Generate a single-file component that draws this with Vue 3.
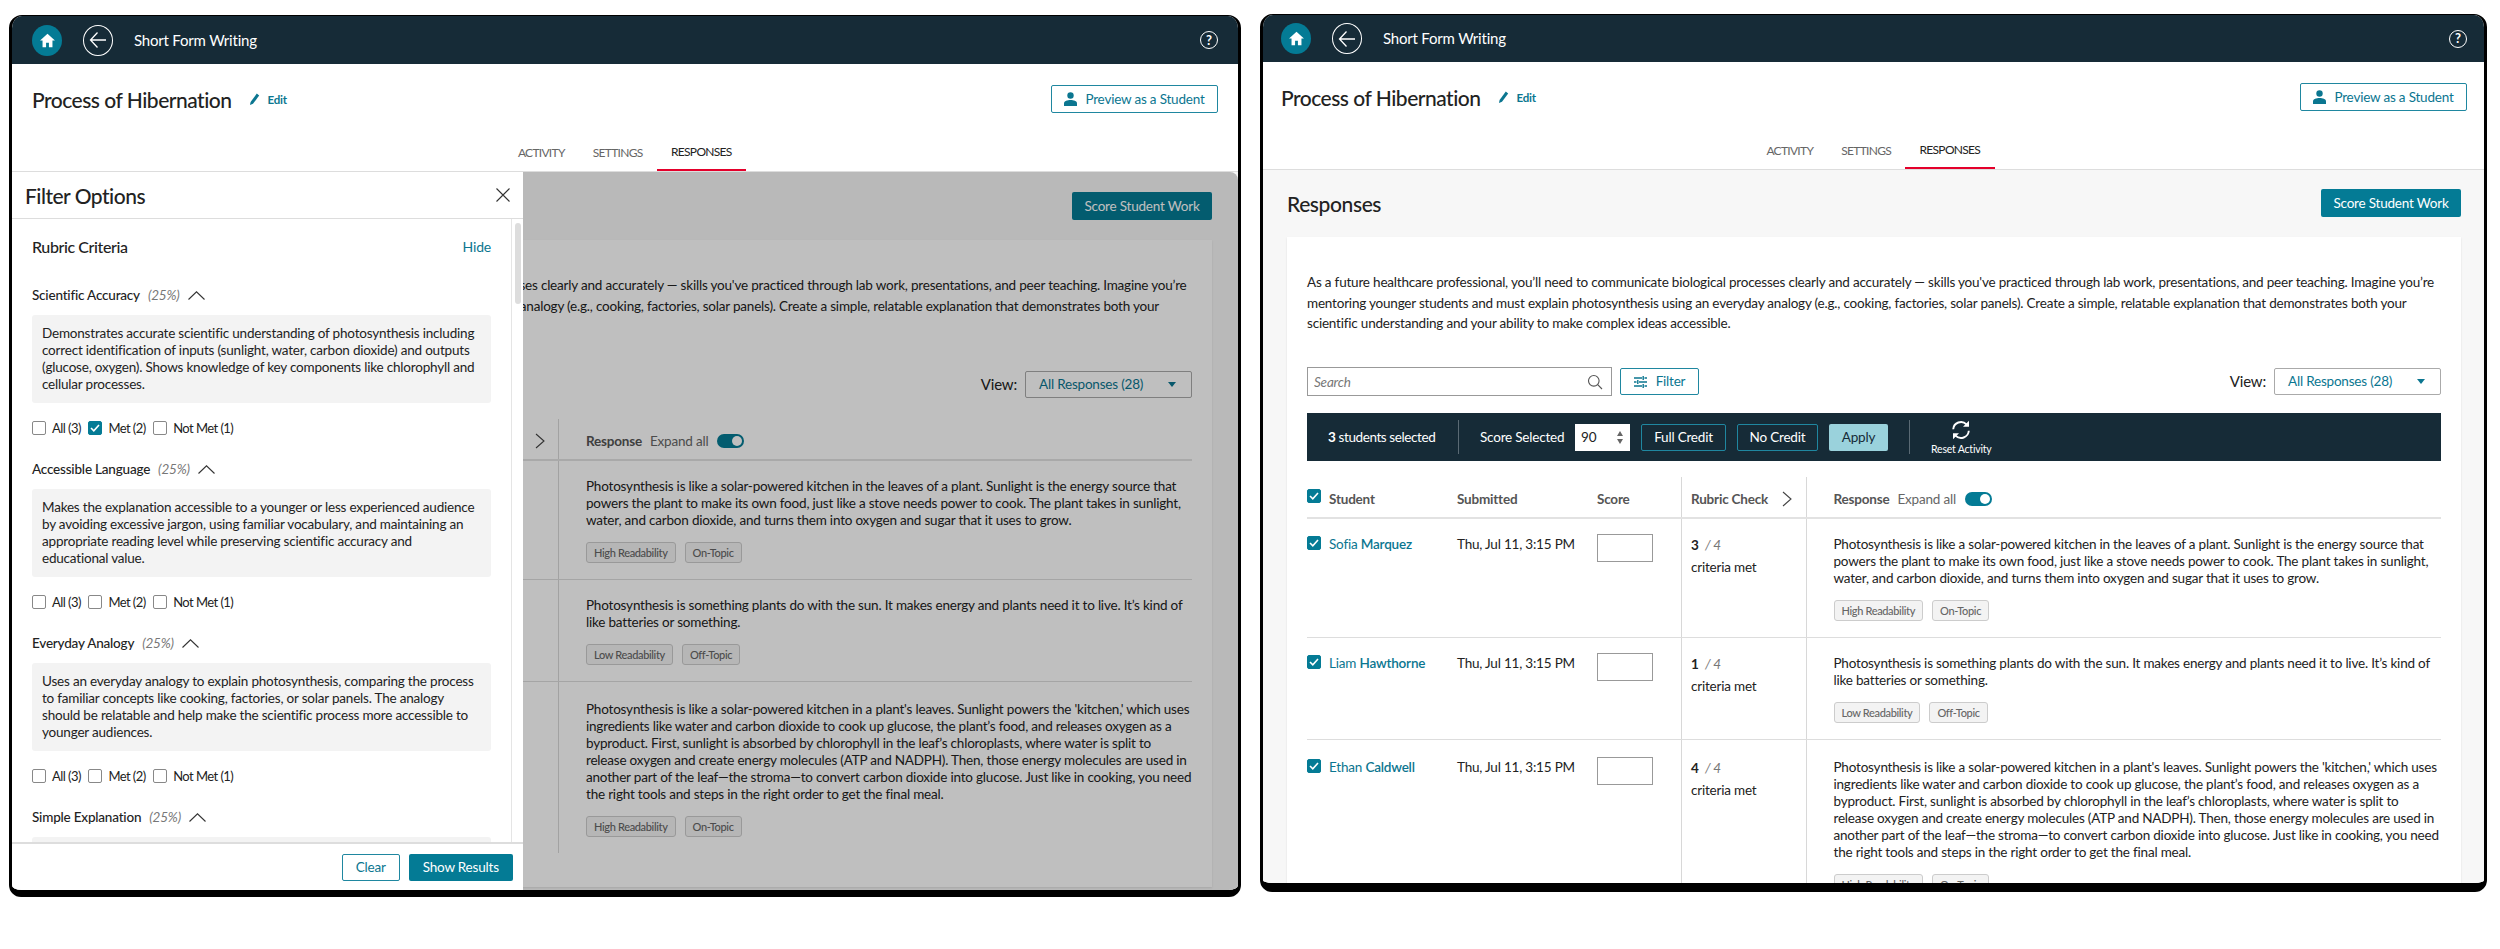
<script setup>
const frames = [
  { id: "a", panel: true },
  { id: "b", panel: false },
]

const tabs = ["ACTIVITY", "SETTINGS", "RESPONSES"]

const intro =
  "As a future healthcare professional, you’ll need to communicate biological processes clearly and accurately — skills you've practiced through lab work, presentations, and peer teaching. Imagine you’re mentoring younger students and must explain photosynthesis using an everyday analogy (e.g., cooking, factories, solar panels). Create a simple, relatable explanation that demonstrates both your scientific understanding and your ability to make complex ideas accessible."

const students = [
  {
    first: "Sofia",
    last: "Marquez",
    met: 3,
    text: "Photosynthesis is like a solar-powered kitchen in the leaves of a plant. Sunlight is the energy source that powers the plant to make its own food, just like a stove needs power to cook. The plant takes in sunlight, water, and carbon dioxide, and turns them into oxygen and sugar that it uses to grow.",
    tags: ["High Readability", "On-Topic"],
  },
  {
    first: "Liam",
    last: "Hawthorne",
    met: 1,
    text: "Photosynthesis is something plants do with the sun. It makes energy and plants need it to live. It’s kind of like batteries or something.",
    tags: ["Low Readability", "Off-Topic"],
  },
  {
    first: "Ethan",
    last: "Caldwell",
    met: 4,
    text: "Photosynthesis is like a solar-powered kitchen in a plant's leaves. Sunlight powers the 'kitchen,' which uses ingredients like water and carbon dioxide to cook up glucose, the plant’s food, and releases oxygen as a byproduct. First, sunlight is absorbed by chlorophyll in the leaf’s chloroplasts, where water is split to release oxygen and create energy molecules (ATP and NADPH). Then, those energy molecules are used in another part of the leaf—the stroma—to convert carbon dioxide into glucose. Just like in cooking, you need the right tools and steps in the right order to get the final meal.",
    tags: ["High Readability", "On-Topic"],
  },
]

const criteria = [
  {
    name: "Scientific Accuracy",
    text: "Demonstrates accurate scientific understanding of photosynthesis including correct identification of inputs (sunlight, water, carbon dioxide) and outputs (glucose, oxygen). Shows knowledge of key components like chlorophyll and cellular processes.",
    metOn: true,
  },
  {
    name: "Accessible Language",
    text: "Makes the explanation accessible to a younger or less experienced audience by avoiding excessive jargon, using familiar vocabulary, and maintaining an appropriate reading level while preserving scientific accuracy and educational value.",
    metOn: false,
  },
  {
    name: "Everyday Analogy",
    text: "Uses an everyday analogy to explain photosynthesis, comparing the process to familiar concepts like cooking, factories, or solar panels. The analogy should be relatable and help make the scientific process more accessible to younger audiences.",
    metOn: false,
  },
  // this one is cut off by the panel footer, only the top of its box shows
  { name: "Simple Explanation", text: "", metOn: false },
]
</script>

<template>
  <div class="page">
    <div v-for="frame in frames" :key="frame.id" class="frame" :class="'frame-' + frame.id">
      <header class="topbar">
        <span class="home">
          <svg width="17" height="17" viewBox="0 0 24 24"><path fill="#fff" d="M12 2.500 1.500 12H5v9.500h5V15h4v6.500h5V12h3.500z" /></svg>
        </span>
        <span class="back">
          <svg width="18" height="18" viewBox="0 0 18 18" fill="none" stroke="#fff" stroke-width="1.300"><path d="M8.500 1.500 1.500 9l7 7.500M1.500 9H17" /></svg>
        </span>
        <span class="app-name">Short Form Writing</span>
        <span class="help">?</span>
      </header>

      <div class="title-row">
        <h1 class="title">Process of Hibernation</h1>
        <span class="edit">
          <svg width="10" height="12" viewBox="0 0 10 12"><path fill="#0b7690" d="M0 12l.6-3L6.800.6l2.400 1.800L3 10.800z" /></svg>
          Edit
        </span>
        <button class="btn-outline preview">
          <svg width="13" height="14" viewBox="0 0 13 14"><circle cx="6.500" cy="3.500" r="3.200" fill="#0b7690" /><path fill="#0b7690" d="M0 14v-2.800C0 9.200 3.500 8 6.500 8s6.500 1.200 6.500 3.200V14z" /></svg>
          Preview as a Student
        </button>
      </div>

      <nav class="tabs">
        <span v-for="tab in tabs" :key="tab" class="tab" :class="{ active: tab === 'RESPONSES' }">{{ tab }}</span>
      </nav>

      <main class="body">
        <div class="section-head">
          <h2 class="section-title">Responses</h2>
          <button class="btn-fill">Score Student Work</button>
        </div>

        <section class="card">
          <p class="intro">{{ intro }}</p>

          <div class="controls">
            <div class="search">
              <input class="search-input" placeholder="Search" />
              <svg width="16" height="16" viewBox="0 0 16 16" fill="none" stroke="#555" stroke-width="1.100"><circle cx="6.800" cy="6.800" r="5.300" /><path d="M10.700 10.700 15 15" /></svg>
            </div>
            <button class="btn-outline filter">
              <svg width="13" height="12" viewBox="0 0 13 12" stroke="#0b7690" stroke-width="1.400" fill="none"><path d="M0 2h8M10.500 2H13M9.200 0v4M0 6h2.500M5 6h8M3.800 4v4M0 10h8M10.500 10H13M9.200 8v4" /></svg>
              Filter
            </button>
            <span class="view-label">View:</span>
            <div class="select">
              <span>All Responses (28)</span>
              <span class="caret"></span>
            </div>
          </div>

          <div v-if="!frame.panel" class="toolbar">
            <span class="selected-count"><b>3</b> students selected</span>
            <span class="bar-divider"></span>
            <span class="score-label">Score Selected</span>
            <div class="stepper">
              <span>90</span>
              <span class="stepper-arrows"><i class="up"></i><i class="down"></i></span>
            </div>
            <button class="btn-bar">Full Credit</button>
            <button class="btn-bar">No Credit</button>
            <button class="btn-apply">Apply</button>
            <span class="bar-divider second"></span>
            <div class="reset">
              <svg width="20" height="20" viewBox="0 0 20 20" fill="none" stroke="#fff" stroke-width="1.900">
                <path d="M2.200 9.200A7.800 7.800 0 0 1 15.500 4.300" />
                <path d="M17.800 10.800A7.800 7.800 0 0 1 4.500 15.700" />
                <path d="M18 .8v6h-6z" fill="#fff" stroke="none" />
                <path d="M2 19.200v-6h6z" fill="#fff" stroke="none" />
              </svg>
              <span>Reset Activity</span>
            </div>
          </div>

          <div class="table">
            <div class="row head">
              <div class="cell student">
                <span class="check on raised"><svg width="10" height="8" viewBox="0 0 10 8" fill="none" stroke="#fff" stroke-width="1.600"><path d="M1 4l2.800 2.800L9 1" /></svg></span>
                <span>Student</span>
              </div>
              <div class="cell">Submitted</div>
              <div class="cell">Score</div>
              <div class="cell rubric">
                Rubric Check
                <svg class="rubric-arrow" width="10" height="16" viewBox="0 0 10 16" fill="none" stroke="#444" stroke-width="1.100"><path d="M1 1l8 7-8 7" /></svg>
              </div>
              <div class="cell response">
                Response
                <span class="expand">Expand all</span>
                <span class="toggle"><i></i></span>
              </div>
            </div>

            <div v-for="s in students" :key="s.first" class="row">
              <div class="cell student">
                <span class="check on"><svg width="10" height="8" viewBox="0 0 10 8" fill="none" stroke="#fff" stroke-width="1.600"><path d="M1 4l2.800 2.800L9 1" /></svg></span>
                <span class="name">{{ s.first }} <b>{{ s.last }}</b></span>
              </div>
              <div class="cell">Thu, Jul 11, 3:15 PM</div>
              <div class="cell"><input class="score-input" /></div>
              <div class="cell rubric">
                <div class="met"><b>{{ s.met }}</b> <em>/ 4</em></div>
                <div class="met-label">criteria met</div>
              </div>
              <div class="cell response">
                <p class="answer">{{ s.text }}</p>
                <div class="tags">
                  <span v-for="tag in s.tags" :key="tag" class="tag">{{ tag }}</span>
                </div>
              </div>
            </div>
          </div>
        </section>

        <template v-if="frame.panel">
          <div class="overlay"></div>
          <aside class="panel">
            <div class="panel-head">
              <span class="panel-title">Filter Options</span>
              <svg width="14" height="14" viewBox="0 0 14 14" stroke="#333" stroke-width="1.100"><path d="M.5.500l13 13M13.500.500l-13 13" /></svg>
            </div>
            <div class="panel-scroll">
              <div class="panel-content">
                <div class="rubric-head">
                  <span class="rubric-title">Rubric Criteria</span>
                  <span class="hide">Hide</span>
                </div>
                <div v-for="c in criteria" :key="c.name" class="criterion">
                  <div class="criterion-head">
                    <b>{{ c.name }}</b>
                    <em>(25%)</em>
                    <svg width="17" height="9" viewBox="0 0 17 9" fill="none" stroke="#333" stroke-width="1.100"><path d="M.5 8.500 8.500.8l8 7.700" /></svg>
                  </div>
                  <p class="criterion-text">{{ c.text }}</p>
                  <div class="options">
                    <label class="option"><span class="check"></span>All (3)</label>
                    <label class="option">
                      <span class="check" :class="{ on: c.metOn }"><svg v-if="c.metOn" width="10" height="8" viewBox="0 0 10 8" fill="none" stroke="#fff" stroke-width="1.600"><path d="M1 4l2.800 2.800L9 1" /></svg></span>Met (2)
                    </label>
                    <label class="option"><span class="check"></span>Not Met (1)</label>
                  </div>
                </div>
              </div>
              <div class="scroll-track"><span class="scroll-thumb"></span></div>
            </div>
            <div class="panel-foot">
              <button class="btn-outline clear">Clear</button>
              <button class="btn-fill results">Show Results</button>
            </div>
          </aside>
        </template>
      </main>
    </div>
  </div>
</template>

<style scoped>
.page {
  display: flex;
  align-items: flex-start;
  gap: 19px;
  padding-left: 9px;
  font-family: Lato, "Noto Sans", sans-serif;
  font-size: 13.5px;
  line-height: 17px;
  letter-spacing: -0.2px;
  color: #222;
}

.frame {
  --pad-l: 20px;
  --pad-r: 20px;
  display: flex;
  flex-direction: column;
  box-sizing: border-box;
  flex: none;
  overflow: hidden;
  background: #fff;
  border: 3px solid #000;
  border-top-width: 1px;
  border-radius: 13px 13px 12px 12px;
}
.frame-a {
  width: 1232px;
  height: 882px;
  margin-top: 15px;
  border-bottom-width: 7px;
}
.frame-b {
  --pad-l: 18px;
  --pad-r: 17px;
  width: 1227px;
  height: 878px;
  margin-top: 14px;
  border-bottom-width: 9px;
}

.topbar {
  display: flex;
  align-items: center;
  flex: none;
  height: 48px;
  padding: 0 var(--pad-r) 0 var(--pad-l);
  background: #162b37;
  color: #fff;
}
.frame-b .topbar {
  height: 47px;
}
.home,
.back {
  display: flex;
  align-items: center;
  justify-content: center;
  box-sizing: border-box;
  width: 30px;
  height: 31px;
  border-radius: 50%;
}
.home {
  background: #047b95;
}
.back {
  margin-left: 21px;
  border: 1px solid #fff;
}
.app-name {
  margin-left: 21px;
  font-size: 15px;
}
.help {
  display: flex;
  align-items: center;
  justify-content: center;
  box-sizing: border-box;
  width: 18px;
  height: 18px;
  margin-left: auto;
  border: 1.500px solid #fff;
  border-radius: 50%;
  font-size: 13px;
  font-weight: 700;
  letter-spacing: 0;
}

.title-row {
  display: flex;
  align-items: center;
  flex: none;
  height: 70px;
  padding: 0 var(--pad-r) 0 var(--pad-l);
}
.title {
  margin: 0;
  font-size: 21px;
  font-weight: 500;
  letter-spacing: -0.5px;
}
.edit {
  display: flex;
  align-items: center;
  gap: 7px;
  margin-left: 19px;
  color: #0b7690;
  font-size: 11.500px;
  font-weight: 700;
}
.preview {
  width: 167px;
  height: 28px;
  margin-left: auto;
  gap: 8px;
}

.btn-outline {
  display: flex;
  align-items: center;
  justify-content: center;
  box-sizing: border-box;
  padding: 0;
  background: #fff;
  border: 1px solid #1f87a0;
  border-radius: 2px;
  color: #0b7690;
  font: inherit;
  letter-spacing: inherit;
}
.btn-fill {
  box-sizing: border-box;
  width: 140px;
  height: 28px;
  padding: 0;
  background: #047b95;
  border: 0;
  border-radius: 2px;
  color: #fff;
  font: inherit;
  letter-spacing: inherit;
}

.tabs {
  display: flex;
  justify-content: center;
  flex: none;
  height: 38px;
  box-sizing: border-box;
  border-bottom: 1px solid #ddd;
}
.tab {
  display: flex;
  align-items: center;
  height: 36px;
  padding: 0 14px;
  color: #666;
  font-size: 12px;
  letter-spacing: -0.7px;
}
.tab.active {
  height: 35px;
  padding: 0 14.500px;
  border-bottom: 2.500px solid #e4002b;
  color: #222;
}

.body {
  position: relative;
  flex: 1;
  min-height: 0;
  overflow: hidden;
  padding: 19px 23px 4px 24px;
  background: #f7f7f7;
}
.frame-a .body {
  padding: 20px 26px 4px 27.500px;
}
.section-head {
  display: flex;
  align-items: center;
  justify-content: space-between;
  margin-bottom: 20px;
}
.section-title {
  margin: 0;
  font-size: 21px;
  font-weight: 500;
  letter-spacing: -0.4px;
}
.card {
  padding: 35px 20px 34px;
  background: #fff;
  box-shadow: 0 1px 2px rgba(0, 0, 0, 0.1);
}
.intro {
  margin: 0;
  line-height: 20.500px;
}
.controls {
  display: flex;
  align-items: center;
  margin-top: 33.500px;
}
.search {
  display: flex;
  align-items: center;
  box-sizing: border-box;
  width: 305px;
  height: 29px;
  padding: 0 8px 0 6px;
  background: #fff;
  border: 1px solid #999;
}
.search-input {
  flex: 1;
  min-width: 0;
  padding: 0;
  border: 0;
  outline: 0;
  font: italic 13.500px Lato, sans-serif;
  letter-spacing: inherit;
}
.search-input::placeholder {
  color: #777;
}
.filter {
  width: 79px;
  height: 27px;
  margin-left: 8px;
  gap: 9px;
}
.view-label {
  margin-left: auto;
  font-size: 15px;
}
.select {
  display: flex;
  align-items: center;
  justify-content: space-between;
  box-sizing: border-box;
  width: 167px;
  height: 27px;
  margin-left: 8px;
  padding: 0 15px 0 13px;
  background: #fff;
  border: 1px solid #aaa;
  border-radius: 2px;
  color: #0b7690;
}
.caret {
  width: 0;
  height: 0;
  border-left: 4px solid transparent;
  border-right: 4px solid transparent;
  border-top: 5px solid #0b7690;
}

.toolbar {
  display: flex;
  align-items: center;
  height: 48px;
  margin: 17px 0 16px;
  padding-left: 21px;
  background: #162b37;
  color: #fff;
}
.selected-count b {
  font-weight: 700;
}
.bar-divider {
  width: 1px;
  height: 34px;
  margin: 0 21px;
  background: #5a6a74;
}
.selected-count {
  width: 109px;
  white-space: nowrap;
  letter-spacing: -0.4px;
}
.score-label {
  width: 84px;
  white-space: nowrap;
}
.stepper {
  display: flex;
  align-items: center;
  justify-content: space-between;
  box-sizing: border-box;
  width: 55px;
  height: 27px;
  margin: 0 11px;
  padding: 0 7px 0 6px;
  background: #fff;
  color: #222;
}
.stepper-arrows {
  display: flex;
  flex-direction: column;
  gap: 3px;
}
.stepper-arrows i {
  width: 0;
  height: 0;
  border-left: 3.500px solid transparent;
  border-right: 3.500px solid transparent;
}
.stepper-arrows .up {
  border-bottom: 5px solid #666;
}
.stepper-arrows .down {
  border-top: 5px solid #666;
}
.btn-bar,
.btn-apply {
  box-sizing: border-box;
  height: 27px;
  padding: 0;
  border-radius: 2px;
  font: inherit;
  letter-spacing: inherit;
}
.btn-bar {
  width: 85px;
  margin-right: 11px;
  background: transparent;
  border: 1px solid #1f87a0;
  color: #fff;
}
.btn-bar + .btn-bar {
  width: 81px;
}
.btn-apply {
  width: 59px;
  background: #9ad2dc;
  border: 0;
  color: #162b37;
}
.bar-divider.second {
  margin: 0 21px 0 21px;
}
.reset {
  display: flex;
  flex-direction: column;
  align-items: center;
  gap: 3px;
  font-size: 10.500px;
  line-height: 12px;
}

.frame-a .table {
  margin-top: 20px;
}
.row {
  display: grid;
  grid-template-columns: 150px 140px 83.500px 125px minmax(0, 1fr);
  padding-bottom: 0;
  border-bottom: 1px solid #ddd;
}
.row:last-child {
  border-bottom: 0;
}
.row.head {
  height: 42px;
  box-sizing: border-box;
  border-bottom: 2px solid #e2e2e2;
  color: #555;
  font-weight: 700;
}
.cell {
  padding: 17px 0 16px;
}
.row:last-child .cell {
  padding-top: 18.500px;
}
.row.head .cell {
  display: flex;
  align-items: center;
  padding: 4px 0 0;
}
.student {
  display: flex;
  align-items: flex-start;
  gap: 8px;
}
.row.head .student {
  align-items: center;
}
.rubric {
  box-sizing: border-box;
  padding-left: 9.500px;
  border-left: 1px solid #d8d8d8;
}
.row.head .rubric {
  padding-left: 9.500px;
}
.rubric-arrow {
  margin-left: 14px;
}
.response {
  padding-left: 27px;
  border-left: 1px solid #d8d8d8;
}
.row.head .response {
  padding-left: 27px;
}
.expand {
  margin-left: 8px;
  color: #666;
  font-weight: 400;
}
.toggle {
  position: relative;
  width: 27px;
  height: 14px;
  margin-left: 9px;
  background: #047b95;
  border-radius: 7px;
}
.toggle i {
  position: absolute;
  top: 2px;
  right: 2px;
  width: 10px;
  height: 10px;
  background: #fff;
  border-radius: 50%;
}
.check {
  display: flex;
  align-items: center;
  justify-content: center;
  box-sizing: border-box;
  flex: none;
  width: 14px;
  height: 14px;
  background: #fff;
  border: 1px solid #888;
  border-radius: 2px;
}
.check.on {
  background: #047b95;
  border-color: #047b95;
}
.check.raised {
  margin-top: -7px;
}
.name {
  color: #0b7690;
}
.name b {
  font-weight: 600;
}
.score-input {
  display: block;
  box-sizing: border-box;
  width: 55.500px;
  height: 28px;
  margin-top: -2px;
  background: #fff;
  border: 1px solid #999;
}
.met {
  line-height: 18px;
}
.met em {
  margin-left: 3px;
  color: #777;
}
.met-label {
  margin-top: 5px;
}
.answer {
  margin: 0;
}
.tags {
  display: flex;
  gap: 9px;
  margin-top: 13px;
}
.tag {
  display: flex;
  align-items: center;
  box-sizing: border-box;
  height: 21px;
  padding: 0 7px;
  background: #f3f3f3;
  border: 1px solid #ccc;
  border-radius: 3px;
  color: #666;
  font-size: 11px;
  font-weight: 500;
  letter-spacing: -0.35px;
}

.overlay {
  position: absolute;
  inset: 0;
  background: rgba(0, 0, 0, 0.25);
  border-top-right-radius: 8px;
}
.panel {
  position: absolute;
  top: 0;
  bottom: 0;
  left: 0;
  display: flex;
  flex-direction: column;
  width: 511px;
  background: #fff;
}
.panel-head {
  display: flex;
  align-items: center;
  justify-content: space-between;
  box-sizing: border-box;
  flex: none;
  height: 47px;
  padding: 0 13px;
  border-bottom: 1px solid #ddd;
}
.panel-title {
  font-size: 21px;
  font-weight: 500;
  letter-spacing: -0.5px;
}
.panel-scroll {
  display: flex;
  flex: 1;
  min-height: 0;
}
.panel-content {
  box-sizing: border-box;
  flex: 1;
  min-width: 0;
  overflow: hidden;
  padding: 17px 20px 0;
  border-right: 1px solid #e5e5e5;
}
.scroll-track {
  flex: none;
  width: 11px;
  padding: 4px 0 0 3px;
  box-sizing: border-box;
}
.scroll-thumb {
  display: block;
  width: 6px;
  height: 81px;
  background: #ddd;
  border-radius: 3px;
}
.rubric-head {
  display: flex;
  align-items: center;
  justify-content: space-between;
  height: 20px;
}
.rubric-title {
  font-size: 16px;
  font-weight: 500;
  letter-spacing: -0.4px;
}
.hide {
  color: #0b7690;
  font-size: 14px;
}
.criterion {
  margin-bottom: 24px;
}
.rubric-head + .criterion {
  margin-top: 29px;
}
.criterion-head {
  display: flex;
  align-items: center;
  height: 20px;
  gap: 8px;
}
.criterion-head b {
  font-weight: 500;
}
.criterion-head em {
  color: #777;
}
.criterion-text {
  height: 68px;
  margin: 10px 0 0;
  padding: 10px;
  background: #f3f3f3;
  border-radius: 3px;
}
.options {
  display: flex;
  gap: 7.500px;
  height: 14px;
  margin-top: 18px;
  font-size: 13px;
  letter-spacing: -0.55px;
}
.option {
  display: flex;
  align-items: center;
  gap: 6px;
}
.panel-foot {
  display: flex;
  justify-content: flex-end;
  gap: 9.500px;
  box-sizing: border-box;
  flex: none;
  height: 48px;
  padding: 10px 10.500px 0 0;
  border-top: 2px solid #ddd;
}
.clear {
  width: 57.500px;
  height: 27px;
}
.results {
  width: 103.500px;
  height: 27px;
}
</style>

<style>
html,
body {
  background: #fff;
}
button {
  cursor: pointer;
}
</style>
